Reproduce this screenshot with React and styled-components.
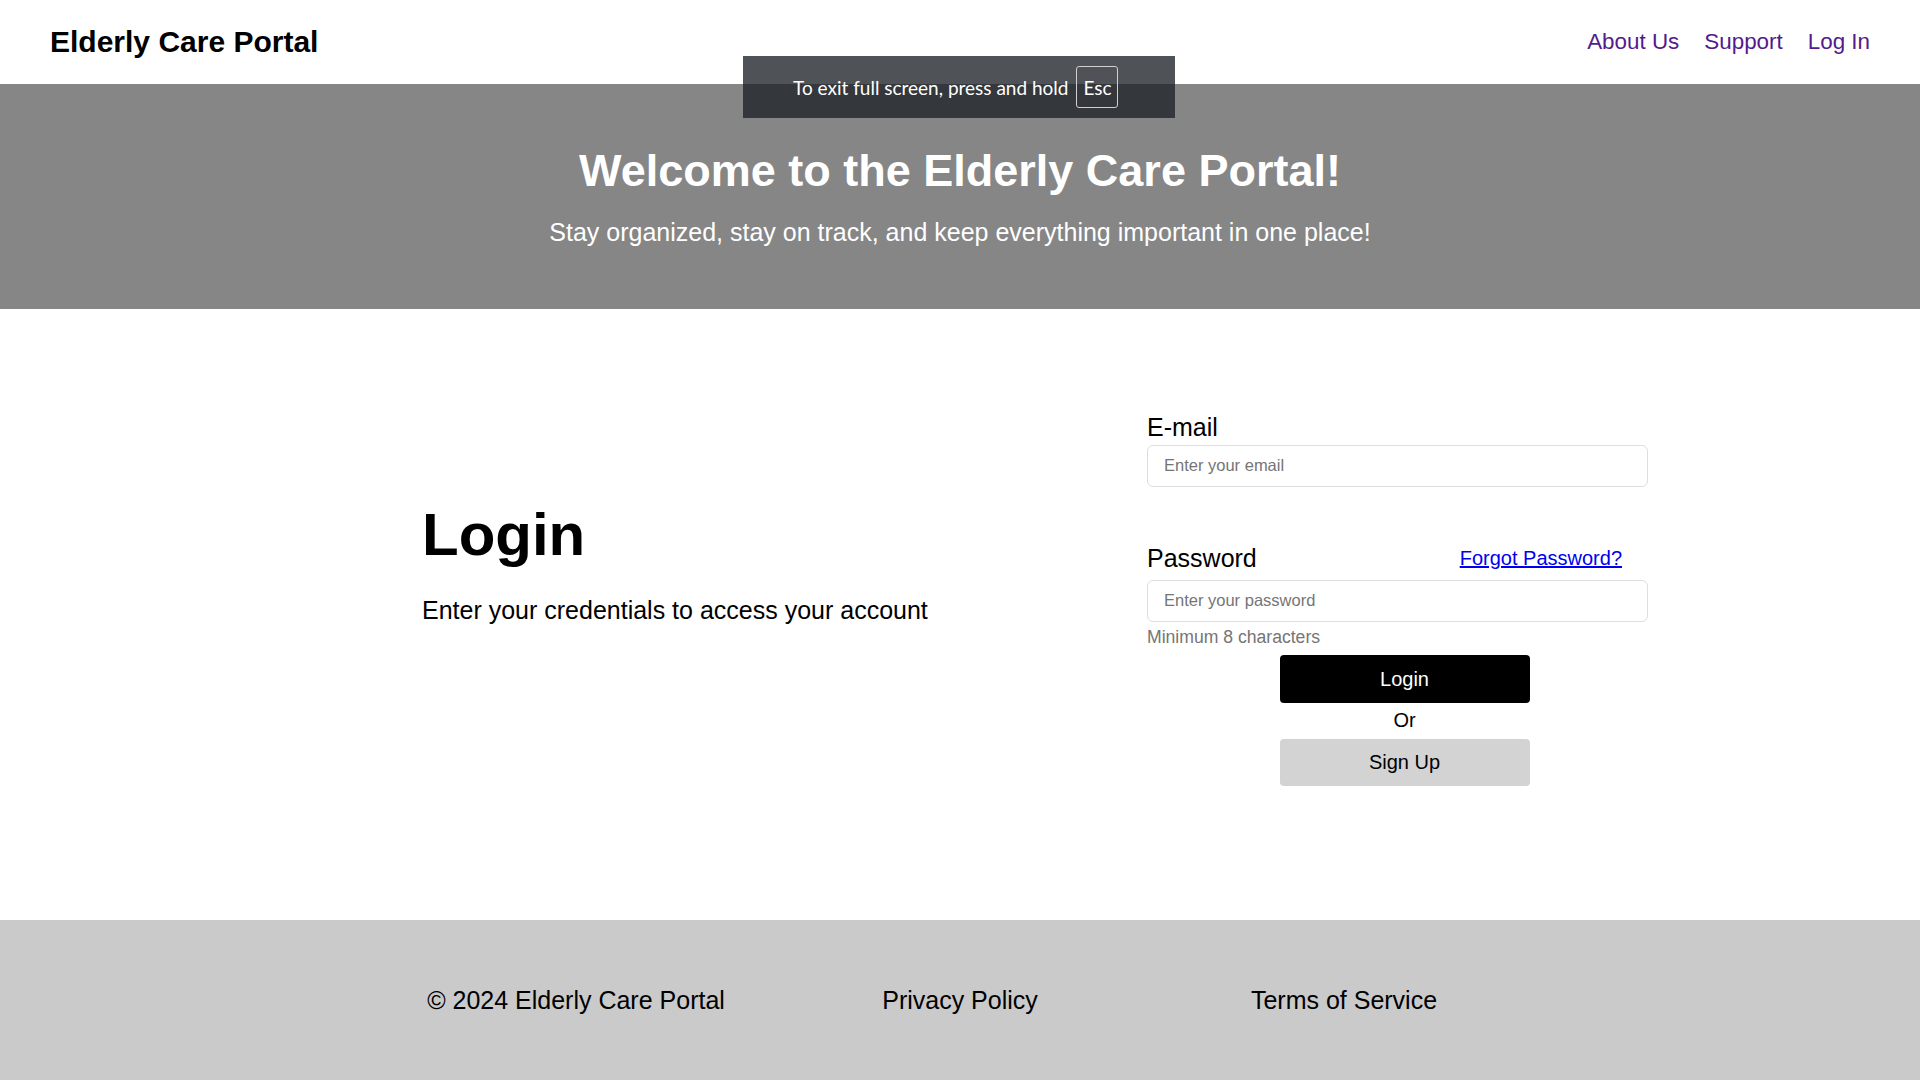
import React from 'react'
import styled, { createGlobalStyle } from 'styled-components'

const GlobalStyle = createGlobalStyle`
  html, body {
    margin: 0;
    padding: 0;
    background: #fff;
    font-family: "Liberation Sans", Arial, sans-serif;
  }
  * {
    box-sizing: border-box;
  }
`

const Page = styled.div`
  position: relative;
  width: 1920px;
  height: 1080px;
  display: flex;
  flex-direction: column;
  overflow: hidden;
`

const Header = styled.header`
  height: 84px;
  padding: 0 50px;
  display: flex;
  align-items: center;
  justify-content: space-between;
  background: #fff;
`

const Brand = styled.div`
  font-size: 30px;
  font-weight: 700;
  color: #000;
  line-height: 1.15;
`

const Nav = styled.nav`
  display: flex;
  gap: 25px;
`

const NavLink = styled.a`
  font-size: 22.4px;
  color: #551a8b;
  text-decoration: none;
  line-height: 1.15;
`

const Hero = styled.section`
  height: 225px;
  padding-top: 61px;
  background: #868686;
  text-align: center;
  color: #fff;
`

const HeroTitle = styled.h1`
  margin: 0 0 21.6px;
  font-size: 45px;
  font-weight: 700;
  line-height: 1.15;
`

const HeroText = styled.p`
  margin: 0;
  font-size: 25px;
  line-height: 1.15;
`

const Main = styled.main`
  height: 611px;
  display: flex;
  padding-left: 422px;
`

const Intro = styled.div`
  width: 725px;
  padding-top: 191px;
`

const IntroTitle = styled.h2`
  margin: 0 0 27px;
  font-size: 60px;
  font-weight: 700;
  line-height: 1.15;
  color: #000;
`

const IntroText = styled.p`
  margin: 0;
  font-size: 25px;
  line-height: 1.15;
  color: #000;
`

const Form = styled.form`
  width: 515px;
  padding-top: 104px;
  display: flex;
  flex-direction: column;
`

const Label = styled.label`
  display: block;
  font-size: 25px;
  line-height: 1.15;
  color: #000;
`

const LabelRow = styled.div`
  width: 475px;
  margin-top: 57px;
  display: flex;
  align-items: center;
  justify-content: space-between;
`

const ForgotLink = styled.a`
  font-size: 20px;
  line-height: 1.15;
  color: #0000ee;
  text-decoration: underline;
`

const Input = styled.input`
  width: 501px;
  height: 42px;
  margin-top: ${p => p.$gap}px;
  padding: 0 16px;
  border: 1px solid #dedede;
  border-radius: 6px;
  font-family: "Liberation Sans", Arial, sans-serif;
  font-size: 16.5px;
  color: #000;
  outline: none;

  &::placeholder {
    color: #757575;
  }
`

const Hint = styled.div`
  margin-top: 5px;
  font-size: 17.6px;
  line-height: 1.15;
  color: #757575;
`

const Button = styled.button`
  align-self: center;
  width: 250px;
  height: ${p => p.$height}px;
  margin-top: ${p => p.$gap}px;
  border: none;
  border-radius: 4px;
  background: ${p => (p.$primary ? '#000' : '#d3d3d3')};
  color: ${p => (p.$primary ? '#fff' : '#000')};
  font-family: "Liberation Sans", Arial, sans-serif;
  font-size: 20px;
  cursor: pointer;
`

const Or = styled.div`
  align-self: center;
  margin-top: 6px;
  font-size: 20px;
  line-height: 1.15;
  color: #000;
`

const Footer = styled.footer`
  height: 160px;
  background: #cacaca;
  display: flex;
  justify-content: center;
`

const FooterGrid = styled.div`
  width: 1152px;
  display: grid;
  grid-template-columns: repeat(3, 1fr);
  align-items: center;
`

const FooterItem = styled.div`
  text-align: center;
  font-size: 25px;
  line-height: 1.15;
  color: #000;
`

const Toast = styled.div`
  position: absolute;
  top: 56px;
  left: 743px;
  width: 432px;
  height: 62px;
  padding-left: 50px;
  display: flex;
  align-items: center;
  gap: 8px;
  background: rgba(30, 33, 38, 0.78);
  color: #fff;
  font-family: Lato, "Noto Sans", sans-serif;
  font-size: 19px;
`

const Key = styled.span`
  width: 42px;
  height: 42px;
  display: flex;
  align-items: center;
  justify-content: center;
  border: 1.5px solid #cfcfcf;
  border-radius: 3px;
  font-size: 19px;
`

export default function App() {
  return (
    <Page>
      <GlobalStyle />
      <Header>
        <Brand>Elderly Care Portal</Brand>
        <Nav>
          <NavLink href="#">About Us</NavLink>
          <NavLink href="#">Support</NavLink>
          <NavLink href="#">Log In</NavLink>
        </Nav>
      </Header>

      <Hero>
        <HeroTitle>Welcome to the Elderly Care Portal!</HeroTitle>
        <HeroText>Stay organized, stay on track, and keep everything important in one place!</HeroText>
      </Hero>

      <Main>
        <Intro>
          <IntroTitle>Login</IntroTitle>
          <IntroText>Enter your credentials to access your account</IntroText>
        </Intro>
        <Form onSubmit={e => e.preventDefault()}>
          <Label htmlFor="email">E-mail</Label>
          <Input id="email" type="email" placeholder="Enter your email" $gap={3} />
          <LabelRow>
            <Label htmlFor="password">Password</Label>
            <ForgotLink href="#">Forgot Password?</ForgotLink>
          </LabelRow>
          <Input id="password" type="password" placeholder="Enter your password" $gap={7} />
          <Hint>Minimum 8 characters</Hint>
          <Button type="submit" $primary $height={48} $gap={8.5}>Login</Button>
          <Or>Or</Or>
          <Button type="button" $height={47} $gap={6.5}>Sign Up</Button>
        </Form>
      </Main>

      <Footer>
        <FooterGrid>
          <FooterItem>© 2024 Elderly Care Portal</FooterItem>
          <FooterItem>Privacy Policy</FooterItem>
          <FooterItem>Terms of Service</FooterItem>
        </FooterGrid>
      </Footer>

      <Toast>
        To exit full screen, press and hold <Key>Esc</Key>
      </Toast>
    </Page>
  )
}
